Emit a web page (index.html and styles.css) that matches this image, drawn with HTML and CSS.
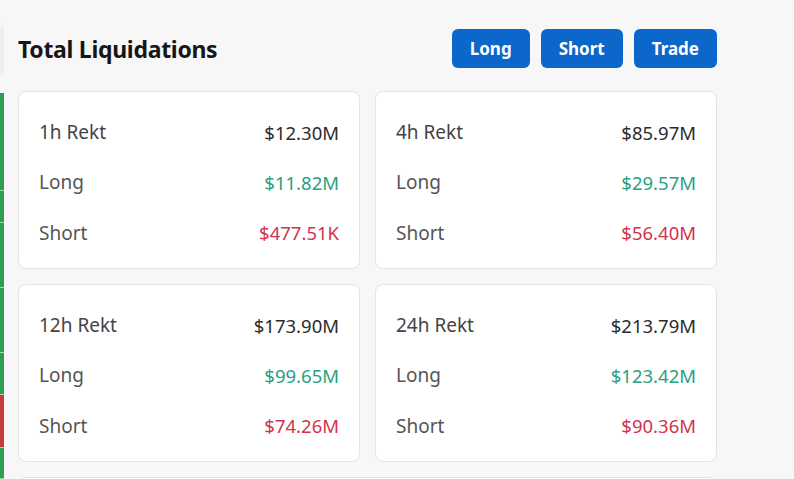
FILE: index.html
```html
<!DOCTYPE html>
<html lang="en">
<head>
<meta charset="UTF-8" />
<title>Total Liquidations</title>
<link rel="stylesheet" href="styles.css">
</head>
<body>

<div class="page">
  <div class="side-strip">
    <div class="strip-fade"></div>
    <div class="strip-bar green" style="height: 98px;"></div>
    <div class="strip-bar green" style="height: 32px;"></div>
    <div class="strip-bar green" style="height: 65px;"></div>
    <div class="strip-bar green" style="height: 65px;"></div>
    <div class="strip-bar green" style="height: 42px;"></div>
    <div class="strip-bar red" style="height: 53px;"></div>
    <div class="strip-bar green" style="height: 31px;"></div>
  </div>

  <div class="main">
    <div class="header">
      <h1>Total Liquidations</h1>
      <div class="actions">
        <button class="btn">Long</button>
        <button class="btn">Short</button>
        <button class="btn">Trade</button>
      </div>
    </div>

    <div class="cards">
      <div class="card">
        <div class="row head"><span>1h Rekt</span><span class="val">$12.30M</span></div>
        <div class="row"><span>Long</span><span class="val up">$11.82M</span></div>
        <div class="row"><span>Short</span><span class="val down">$477.51K</span></div>
      </div>
      <div class="card">
        <div class="row head"><span>4h Rekt</span><span class="val">$85.97M</span></div>
        <div class="row"><span>Long</span><span class="val up">$29.57M</span></div>
        <div class="row"><span>Short</span><span class="val down">$56.40M</span></div>
      </div>
      <div class="card">
        <div class="row head"><span>12h Rekt</span><span class="val">$173.90M</span></div>
        <div class="row"><span>Long</span><span class="val up">$99.65M</span></div>
        <div class="row"><span>Short</span><span class="val down">$74.26M</span></div>
      </div>
      <div class="card">
        <div class="row head"><span>24h Rekt</span><span class="val">$213.79M</span></div>
        <div class="row"><span>Long</span><span class="val up">$123.42M</span></div>
        <div class="row"><span>Short</span><span class="val down">$90.36M</span></div>
      </div>
      <div class="card wide"></div>
    </div>
  </div>
</div>

</body>
</html>
```

FILE: styles.css
```css
html, body {
  margin: 0;
  padding: 0;
  background-color: #f7f7f7;
  color: #222;
  font-family: 'Noto Sans', 'Open Sans', Arial, sans-serif;
  height: 479px;
  overflow: hidden;
}

.page {
  display: flex;
}

.side-strip {
  width: 4px;
  display: flex;
  flex-direction: column;
  flex-shrink: 0;
}

.strip-fade {
  height: 93px;
  background: linear-gradient(#f7f7f7 20px, #eeeeee 30px, #eeeeee 70px, #f7f7f7 80px);
}

.strip-bar {
  border-bottom: 1px solid #9fd6ad;
  box-sizing: border-box;
}

.strip-bar.green {
  background-color: #2e9d4e;
}

.strip-bar.red {
  background-color: #c8393d;
}

.main {
  width: 699px;
  padding-left: 14px;
}

.header {
  display: flex;
  justify-content: space-between;
  align-items: center;
  height: 39px;
  margin-top: 29px;
  margin-bottom: 23px;
}

h1 {
  margin: 0;
  font-size: 23px;
  font-weight: bold;
  color: #161616;
  letter-spacing: -0.3px;
}

.actions {
  display: flex;
  gap: 11px;
}

.btn {
  height: 39px;
  padding: 0 18px;
  font-family: inherit;
  font-size: 17px;
  font-weight: bold;
  color: white;
  background-color: #0b67c9;
  border: none;
  border-radius: 6px;
  cursor: pointer;
}

.cards {
  display: grid;
  grid-template-columns: 1fr 1fr;
  gap: 15px;
}

.card {
  background: white;
  border: 1px solid #e4e4e4;
  border-radius: 8px;
  height: 178px;
  box-sizing: border-box;
  padding: 15px 20px 10px 20px;
  display: flex;
  flex-direction: column;
}

.card.wide {
  grid-column: 1 / 3;
  height: 20px;
}

.row {
  display: flex;
  justify-content: space-between;
  align-items: center;
  height: 51px;
  font-size: 19px;
  color: #555;
}

.row.head {
  color: #444;
}

.row .val {
  font-size: 18.5px;
  color: #2b2b2b;
}

.row .val.up {
  color: #27a17f;
}

.row .val.down {
  color: #d3324c;
}
```
